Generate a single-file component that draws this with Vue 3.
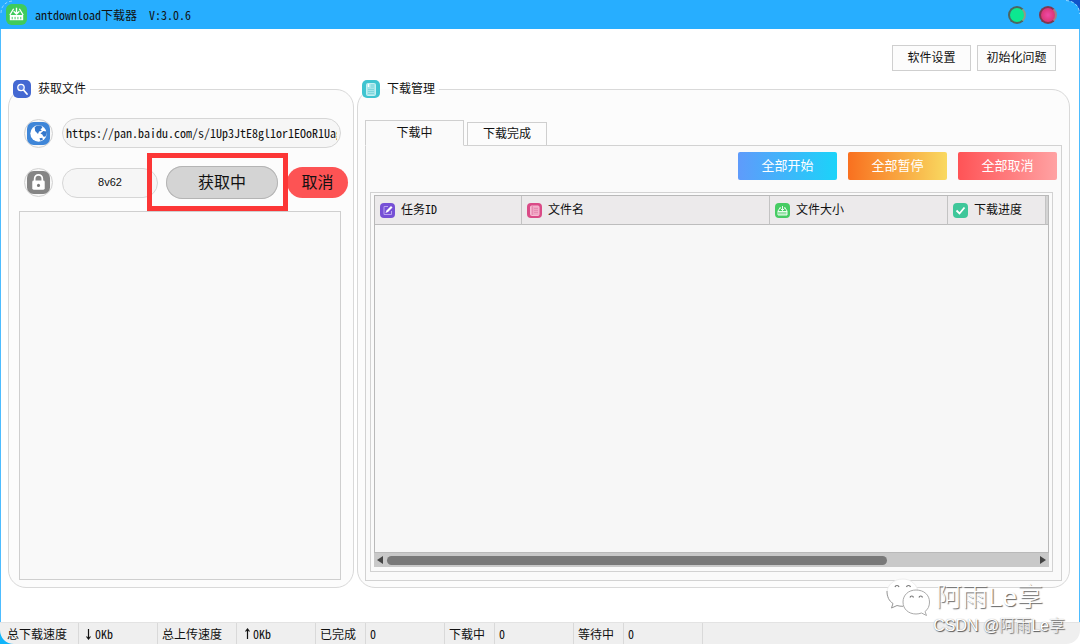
<script setup>
import { ref } from 'vue'

const url = ref('https://pan.baidu.com/s/1Up3JtE8gl1or1EOoR1Uag')
const code = ref('8v62')

const columns = [
  { key: 'id', label: '任务ID' },
  { key: 'name', label: '文件名' },
  { key: 'size', label: '文件大小' },
  { key: 'progress', label: '下载进度' },
]

const stats = [
  { label: '总下载速度', value: '0Kb', arrow: 'down', wide: true },
  { label: '总上传速度', value: '0Kb', arrow: 'up', wide: true },
  { label: '已完成', value: '0' },
  { label: '下载中', value: '0' },
  { label: '等待中', value: '0' },
]
</script>

<template>
  <div class="window">
    <header class="titlebar">
      <svg class="logo" viewBox="0 0 22 22" aria-hidden="true">
        <rect width="22" height="22" rx="6" fill="#3fcb5c" />
        <path d="M8 5 4 11.500M14 5l4 6.500M11 4v6M8 7.500l3 3 3-3" fill="none" stroke="#fff" stroke-width="1.400" />
        <path d="M4 11.500h14V17H4z" fill="#fff" />
        <path d="M6.500 13.500V16M9.500 13.500V16M12.500 13.500V16M15.500 13.500V16" stroke="#3fcb5c" />
      </svg>
      <h1 class="title">antdownload下载器</h1>
      <span class="version">V:3.0.6</span>
      <div class="controls">
        <button class="dot dot-min" aria-label="最小化"></button>
        <button class="dot dot-close" aria-label="关闭"></button>
      </div>
    </header>

    <div class="body">
      <div class="tools">
        <button class="plain">软件设置</button>
        <button class="plain">初始化问题</button>
      </div>

      <main class="groups">
        <fieldset class="group fetch">
          <legend>
            <svg class="legend-icon" viewBox="0 0 18 18" aria-hidden="true">
              <rect width="18" height="18" rx="5" fill="#4468d2" />
              <circle cx="8" cy="7.500" r="3.200" fill="#5f82e4" stroke="#fff" stroke-width="1.300" />
              <path d="m10.500 10 3.500 4" stroke="#fff" stroke-width="1.800" stroke-linecap="round" />
            </svg>
            <span>获取文件</span>
          </legend>
          <div class="row url-row">
            <label class="badge" for="url" aria-label="链接">
              <svg viewBox="0 0 24 24" aria-hidden="true">
                <rect width="24" height="24" rx="7" fill="#3f86d8" />
                <circle cx="12" cy="12" r="8.500" fill="#fff" />
                <path d="M8 5.500c2-2 5-2 7-1.500l1 2-2 1.500 1.500 1.500-3 1-1 2.500-3-3zM14 12l3-2.500 3.500.5c.5 2-.2 4-1.500 5.500l-2-.5-1-2zM13 17l3-.5.5 2-2.500 1z" fill="#3478cc" />
              </svg>
            </label>
            <input id="url" v-model="url" class="field" type="text" />
          </div>
          <div class="row code-row">
            <label class="badge" for="code" aria-label="提取码">
              <svg viewBox="0 0 24 24" aria-hidden="true">
                <rect width="24" height="24" rx="7" fill="#858585" />
                <path d="M8 11V8a4 4 0 0 1 8 0v3" fill="none" stroke="#fff" stroke-width="1.800" />
                <rect x="5.500" y="10" width="13" height="9.500" rx="1.500" fill="#fff" />
                <circle cx="12" cy="15" r="1.600" fill="#777" />
              </svg>
            </label>
            <input id="code" v-model="code" class="field code" type="text" />
            <div class="marked">
              <button class="pill fetching">获取中</button>
              <span class="marker"></span>
            </div>
            <button class="pill cancel">取消</button>
          </div>
          <div class="filelist"></div>
        </fieldset>

        <fieldset class="group manage">
          <legend>
            <svg class="legend-icon" viewBox="0 0 18 18" aria-hidden="true">
              <rect width="18" height="18" rx="5" fill="#3fc4d0" />
              <rect x="4.500" y="3.500" width="9" height="12" rx="1" fill="#a5e6ea" stroke="#c4f0f2" />
              <path d="M9 5h3M9 7h3M6 9.500h6M6 11.500h6M6 13.500h6" stroke="#7fd5dc" />
              <path d="M6.500 4v3" stroke="#fff" stroke-width="1.500" />
            </svg>
            <span>下载管理</span>
          </legend>
          <div class="tabs" role="tablist">
            <button class="tab active" role="tab" aria-selected="true">下载中</button>
            <button class="tab" role="tab" aria-selected="false">下载完成</button>
          </div>
          <div class="panel" role="tabpanel">
            <div class="actions">
              <button class="action start">全部开始</button>
              <button class="action pause">全部暂停</button>
              <button class="action stop">全部取消</button>
            </div>
            <div class="frame">
              <div class="grid">
                <table>
                  <thead>
                    <tr>
                      <th v-for="c in columns" :key="c.key" :class="c.key" scope="col">
                        <span class="head">
                          <svg v-if="c.key === 'id'" viewBox="0 0 15 15" aria-hidden="true">
                            <rect width="15" height="15" rx="4" fill="#7650d6" />
                            <path d="M8 3.500H4v8h7.500V8" fill="none" stroke="#b9a4ee" />
                            <path d="m5.500 10 1-2.500L11 3l1.500 1.500L8 9z" fill="#fff" />
                          </svg>
                          <svg v-else-if="c.key === 'name'" viewBox="0 0 15 15" aria-hidden="true">
                            <rect width="15" height="15" rx="4" fill="#da4b87" />
                            <rect x="3.500" y="3" width="8.500" height="9.500" rx="1" fill="#f0a4c3" stroke="#f5bdd4" />
                            <path d="M5.500 3v9M7 5.500h4M7 7.500h4M7 9.500h4" stroke="#e388ae" stroke-width=".8" />
                          </svg>
                          <svg v-else-if="c.key === 'size'" viewBox="0 0 15 15" aria-hidden="true">
                            <rect width="15" height="15" rx="4" fill="#46cc63" />
                            <path d="M5.500 4 3 8v4h9V8L9.500 4M7.500 3v4.500M5.500 5.500l2 2 2-2M3 8.500h9M5 9v3M7 9v3M9 9v3M11 9v3" fill="none" stroke="#fff" stroke-width=".9" />
                          </svg>
                          <svg v-else viewBox="0 0 15 15" aria-hidden="true">
                            <rect width="15" height="15" rx="4" fill="#3fc79a" />
                            <path d="m3.500 7.500 3 3L11.500 4.500" fill="none" stroke="#fff" stroke-width="1.800" />
                          </svg>
                          <span>{{ c.label }}</span>
                        </span>
                      </th>
                      <td class="filler"></td>
                    </tr>
                  </thead>
                </table>
              </div>
              <div class="scrollbar">
                <svg viewBox="0 0 6 8" aria-hidden="true"><path d="M6 0v8L0 4z" /></svg>
                <div class="track"><div class="thumb"></div></div>
                <svg viewBox="0 0 6 8" aria-hidden="true"><path d="M0 0v8l6-4z" /></svg>
              </div>
            </div>
          </div>
        </fieldset>
      </main>
    </div>

    <footer class="status">
      <template v-for="s in stats" :key="s.label">
        <span class="cell" :class="{ wide: s.wide }">{{ s.label }}</span>
        <span class="cell value">
          <svg v-if="s.arrow" class="arrow" :class="s.arrow" viewBox="0 0 12 12" aria-hidden="true">
            <path d="M5.500 1v10M3.500 8.500l2 2.500 2-2.500" fill="none" stroke="#111" stroke-width="1.200" />
          </svg>{{ s.value }}
        </span>
      </template>
    </footer>

    <svg class="corner top-left" viewBox="0 0 14 14" aria-hidden="true"><path d="M1 13c0-7 5-12 12-12" fill="none" stroke="#8fd4ff" stroke-dasharray="3 2" /></svg>
    <svg class="corner top-right" viewBox="0 0 14 14" aria-hidden="true"><path d="M0 0h14v14C14 6 8 1 0 0z" fill="#1052c8" /><path d="M0 0.500C8 1 13.500 6 13.500 14" fill="none" stroke="#8fd4ff" stroke-dasharray="3 2" /></svg>
    <svg class="corner bottom-left" viewBox="0 0 14 14" aria-hidden="true"><path d="M0 0c0 8 6 14 14 14H0z" fill="#10b4fa" /></svg>
    <svg class="corner bottom-right" viewBox="0 0 14 14" aria-hidden="true"><path d="M14 0c0 8-6 14-14 14h14z" fill="#fff" /></svg>

    <div class="watermark">
      <div class="brand">
        <svg viewBox="0 0 46 38" aria-hidden="true">
          <g fill="#fff" stroke-linejoin="round">
            <path d="M17 1C8 1 1 7 1 14.500c0 5 2 8.500 6 11L5.500 30l5.500-2.500c2 .6 4 .8 6 .8 8 0 15-6 15-13.500S25 1 17 1z" stroke="#eee" />
            <path d="M1 13c0 5.500 2 10 6 12.500L5.500 30l5.500-2.500c2 .6 4 .8 6 .8" stroke="#999" />
            <path d="M30 12c-7.500 0-13 5-13 12s5.500 12 13 12c2 0 4-.4 5.500-1l5 2.500-1.500-4c3-2 4.500-5.500 4.500-9.500 0-7-5.500-12-13.500-12z" stroke="#aaa" />
          </g>
          <path d="M9 9c.5-2 3.500-2 4 0M20.500 9c.5-2 3.500-2 4 0M24 19.500c.5-2 3-2 3.500 0M33 19.500c.5-2 3-2 3.500 0" fill="none" stroke="#777" stroke-width="1.200" />
        </svg>
        <span>阿雨Le享</span>
      </div>
      <div class="credit">CSDN @阿雨Le享</div>
    </div>
  </div>
</template>

<style>
body {
  margin: 0;
}
</style>

<style scoped>
.window,
.window button,
.window input {
  font-family: "Noto Sans CJK SC", "Liberation Sans", sans-serif;
  font-size: 12px;
  line-height: 18px;
  font-feature-settings: "hwid";
  color: #111;
}
.window * {
  box-sizing: border-box;
}
.window {
  position: relative;
  display: flex;
  flex-direction: column;
  min-height: 100vh;
  overflow: hidden;
  background: #fff;
}
.window button {
  padding: 0 0 2px;
  cursor: pointer;
}
.titlebar {
  display: flex;
  align-items: center;
  height: 29px;
  padding: 0 23px 0 6px;
  background: #27aeff;
}
.logo {
  width: 21px;
  height: 21px;
}
.title {
  margin: 0 12px 0 8px;
  font-size: 12px;
  font-weight: 400;
}
.controls {
  display: flex;
  gap: 13px;
  margin-left: auto;
}
.dot {
  width: 18px;
  height: 18px;
  border: 2px solid #4c6660;
  border-right-color: #8f9c88;
  border-radius: 50%;
}
.dot-min {
  background: #0ce890;
}
.dot-close {
  border-color: #7c3850 #a08084 #7c3850 #7c3850;
  background: radial-gradient(#ee4ba6, #d32c62);
}
.body {
  flex: 1;
  display: flex;
  flex-direction: column;
  padding: 16px 9px 34px 7px;
  border: solid #4dbcff;
  border-width: 0 1px;
}
.tools {
  display: flex;
  justify-content: flex-end;
  gap: 6px;
  margin: 0 14px 9px 0;
}
.plain {
  width: 79px;
  height: 26px;
  border: 1px solid #cfcfcf;
  background: #fcfcfc;
}
.groups {
  flex: 1;
  display: grid;
  grid-template-columns: 346fr 713fr;
  gap: 3px;
}
.group {
  display: flex;
  flex-direction: column;
  min-width: 0;
  margin: 0;
  border: 1px solid #d9d9d9;
  border-radius: 18px;
  background: #fcfcfc;
}
legend {
  display: flex;
  align-items: center;
  gap: 7px;
  height: 18px;
  padding: 0 4px 0 0;
}
legend span,
.head span {
  padding-bottom: 2px;
}
.legend-icon {
  width: 18px;
  height: 18px;
}
.fetch {
  padding: 20px 5px 7px 10px;
}
.fetch legend {
  margin-left: -6px;
}
.row {
  display: flex;
  align-items: center;
  padding-left: 5px;
}
.url-row {
  margin: 0 7px 18px 0;
}
.code-row {
  margin-bottom: 12px;
}
.badge {
  display: flex;
  align-items: center;
  justify-content: center;
  flex: none;
  width: 29px;
  height: 29px;
  margin-right: 9px;
  border: 1px solid #d2d2d2;
  border-radius: 50%;
  background: #f7f7f7;
}
.badge svg {
  width: 23px;
  height: 23px;
}
.field {
  flex: 1;
  min-width: 0;
  height: 30px;
  padding: 0 3px 2px;
  border: 1px solid #d6d6d6;
  border-radius: 15px;
  background: #f6f6f6;
  outline: none;
}
.window .code {
  font-family: "Liberation Sans", Arial, sans-serif;
  font-size: 11px;
  text-align: center;
}
.marked {
  position: relative;
  display: flex;
  margin: 0 9px 0 8px;
}
.marker {
  position: absolute;
  inset: -13px -10px -12px -19px;
  border: 5px solid #fc3636;
  pointer-events: none;
}
.window .pill {
  padding-bottom: 4px;
  border: 0;
  border-radius: 17px;
  font-size: 16px;
}
.fetching {
  width: 112px;
  height: 33px;
  box-shadow: inset 0 0 0 1px #b4b4b4;
  background: #d4d4d4;
}
.cancel {
  width: 61px;
  height: 31px;
  background: #fd5354;
}
.filelist {
  flex: 1;
  margin-right: 7px;
  border: 1px solid #cfcfcf;
  background: #f9f9f9;
}
.manage {
  padding: 22px 7px 6px;
}
.manage legend {
  margin-left: -3px;
}
.tabs {
  display: flex;
  align-items: flex-end;
  gap: 3px;
  margin-bottom: -1px;
}
.tab {
  width: 80px;
  height: 24px;
  border: 1px solid #cfcfcf;
  background: #fcfcfc;
}
.tab.active {
  position: relative;
  width: 99px;
  height: 26px;
  border-bottom-color: #fafafa;
  background: #fafafa;
}
.panel {
  flex: 1;
  display: flex;
  flex-direction: column;
  padding: 6px 4px 8px;
  border: 1px solid #d2d2d2;
  background: #fafafa;
}
.actions {
  display: flex;
  justify-content: flex-end;
  gap: 11px;
  margin-bottom: 12px;
}
.window .action {
  width: 99px;
  height: 28px;
  border: 0;
  border-radius: 2px;
  color: #fff;
  font-size: 13px;
}
.start {
  background: linear-gradient(90deg, #5f9bfb, #1bd3f9);
}
.pause {
  background: linear-gradient(90deg, #f9701f, #f9d960);
}
.stop {
  background: linear-gradient(90deg, #ff5356, #ffa2a3);
}
.frame {
  flex: 1;
  display: flex;
  flex-direction: column;
  margin-right: 4px;
  padding: 2px 3px 4px;
  border: 1px solid #d2d2d2;
}
.grid {
  flex: 1;
  border: 1px solid #b9b9b9;
  background: #f7f7f7;
}
table {
  width: 100%;
  table-layout: fixed;
  border-collapse: separate;
  border-spacing: 0;
}
th,
.filler {
  height: 29px;
  padding: 0 0 0 5px;
  border-right: 1px solid #c3c3c3;
  border-bottom: 1px solid #bdbdbd;
  background: #eceaeb;
  font-weight: 400;
  text-align: left;
}
.id {
  width: 147px;
}
.name {
  width: 248px;
}
.size {
  width: 178px;
}
.filler {
  width: 2px;
  padding: 0;
  border-right: 0;
  background: #d4d4d4;
}
.head {
  display: flex;
  align-items: center;
  gap: 6px;
}
.head svg {
  width: 15px;
  height: 15px;
}
.scrollbar {
  display: flex;
  align-items: center;
  gap: 4px;
  height: 14px;
  padding: 0 3px;
  background: #c9c9c9;
}
.scrollbar > svg {
  width: 6px;
  height: 8px;
  fill: #444;
}
.track {
  flex: 1;
}
.thumb {
  width: 77%;
  height: 9px;
  border-radius: 5px;
  background: #797979;
}
.status {
  display: flex;
  height: 22px;
  border-top: 1px solid #e3e3e3;
  background: #efefef;
}
.cell {
  display: flex;
  align-items: center;
  width: 50px;
  padding-left: 4px;
  border-right: 1px solid #d9d9d9;
  white-space: nowrap;
}
.cell.wide,
.cell.value {
  width: 79px;
}
.cell:first-child {
  padding-left: 7px;
}
.arrow {
  width: 12px;
  height: 12px;
}
.arrow.up {
  transform: rotate(180deg);
}
.corner {
  position: absolute;
  width: 14px;
  height: 14px;
}
.top-left {
  top: 0;
  left: 0;
}
.top-right {
  top: 0;
  right: 0;
}
.bottom-left {
  bottom: 0;
  left: 0;
}
.bottom-right {
  right: 0;
  bottom: 0;
}
.watermark {
  position: absolute;
  right: 15px;
  bottom: 8px;
  display: flex;
  flex-direction: column;
  align-items: flex-end;
  font-family: "Liberation Sans", "Noto Sans CJK SC", sans-serif;
  font-feature-settings: normal;
  color: #fff;
  pointer-events: none;
}
.brand {
  display: flex;
  align-items: center;
  gap: 4px;
  margin-right: 22px;
  font-size: 26px;
  font-weight: 300;
  line-height: 34px;
  text-shadow: 1px 1px 1px #666;
}
.brand svg {
  width: 46px;
  height: 38px;
}
.credit {
  font-size: 16px;
  font-weight: 300;
  line-height: 20px;
  text-shadow: 1px 1px 1px #555, 0 0 1px #999;
}
</style>
